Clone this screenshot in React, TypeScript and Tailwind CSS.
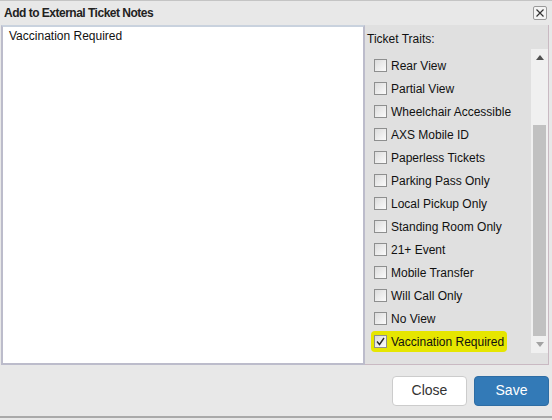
import React from 'react'

const traits = [
  'Rear View',
  'Partial View',
  'Wheelchair Accessible',
  'AXS Mobile ID',
  'Paperless Tickets',
  'Parking Pass Only',
  'Local Pickup Only',
  'Standing Room Only',
  '21+ Event',
  'Mobile Transfer',
  'Will Call Only',
  'No View',
  'Vaccination Required',
]

function Box({ checked }: { checked?: boolean }) {
  return (
    <span className="w-[13px] h-[13px] shrink-0 border border-[#8e8f8f] bg-gradient-to-br from-[#dcdcdc] to-[#fbfbfb] flex items-center justify-center">
      {checked && (
        <svg width="9" height="9" viewBox="0 0 9 9">
          <path d="M1 4.5 L3.5 7.5 L8 1" fill="none" stroke="#2a2a2a" strokeWidth="1.4" />
        </svg>
      )}
    </span>
  )
}

export default function App() {
  return (
    <div
      className="w-[552px] h-[420px] bg-[#e8e8e8] flex flex-col text-[12px] text-[#111]"
      style={{ fontFamily: '"Liberation Sans", Arial, sans-serif' }}
    >
      {/* Title bar */}
      <div className="h-[25px] shrink-0 border-t border-[#c4c4c4] flex items-center justify-between pl-[4px] pr-[5px]">
        <span className="font-bold text-[#222] tracking-[-0.5px]">Add to External Ticket Notes</span>
        <button className="w-[14px] h-[14px] border border-[#9a9a9a] rounded-[2px] bg-[#f4f4f4] flex items-center justify-center">
          <svg width="8" height="8" viewBox="0 0 8 8">
            <path d="M0.5 0.5 L7.5 7.5 M7.5 0.5 L0.5 7.5" stroke="#333" strokeWidth="1.2" />
          </svg>
        </button>
      </div>

      {/* Body */}
      <div className="h-[340px] shrink-0 flex pl-[1px]">
        <textarea
          defaultValue="Vaccination Required"
          className="w-[364px] h-full resize-none border-2 border-[#bcbccb] border-t-[#c9d2de] bg-white px-[6px] py-0 outline-none text-[12px] text-[#111]"
          style={{ fontFamily: '"Liberation Sans", Arial, sans-serif' }}
        />
        <div className="w-[184px] h-full bg-[#e0e0e0] border-r border-b border-[#c9b9c2] flex flex-col">
          <div className="h-[24px] pl-[2px] pt-[5px] text-[#111]">Ticket Traits:</div>
          <div className="h-[304px] flex">
            <div className="flex-1 flex flex-col pt-[5px] pl-[9px]">
              {traits.map((t, i) => {
                const last = i === traits.length - 1
                return (
                  <div key={t} className="h-[23px] flex items-center">
                    <div
                      className={
                        last
                          ? 'flex items-center gap-[4px] bg-[#e6e600] rounded-[4px] pl-[3px] pr-[3px] -ml-[3px] h-[21px]'
                          : 'flex items-center gap-[4px] pl-[3px] -ml-[3px] h-[21px]'
                      }
                    >
                      <Box checked={last} />
                      <span className="whitespace-nowrap">{t}</span>
                    </div>
                  </div>
                )
              })}
            </div>
            {/* scrollbar */}
            <div className="w-[17px] h-full bg-[#f0f0f0] flex flex-col items-center">
              <div className="h-[17px] w-full flex items-center justify-center">
                <svg width="8" height="5" viewBox="0 0 8 5">
                  <path d="M0 5 L4 0 L8 5 Z" fill="#505050" />
                </svg>
              </div>
              <div className="h-[59px]" />
              <div className="w-[13px] h-[211px] bg-[#c1c1c1]" />
              <div className="flex-1 w-full flex items-center justify-center">
                <svg width="8" height="5" viewBox="0 0 8 5">
                  <path d="M0 0 L4 5 L8 0 Z" fill="#a3a3a3" />
                </svg>
              </div>
            </div>
          </div>
        </div>
      </div>

      {/* Footer */}
      <div className="h-[53px] shrink-0 flex items-center justify-end gap-[7px] pr-[3px] border-b-2 border-[#a9a9a9]">
        <button className="w-[75px] h-[30px] bg-white border border-[#cccccc] rounded-[4px] text-[14px] text-[#333]">
          Close
        </button>
        <button className="w-[75px] h-[30px] bg-[#337ab7] border border-[#2e6da4] rounded-[4px] text-[14px] text-white">
          Save
        </button>
      </div>
    </div>
  )
}
